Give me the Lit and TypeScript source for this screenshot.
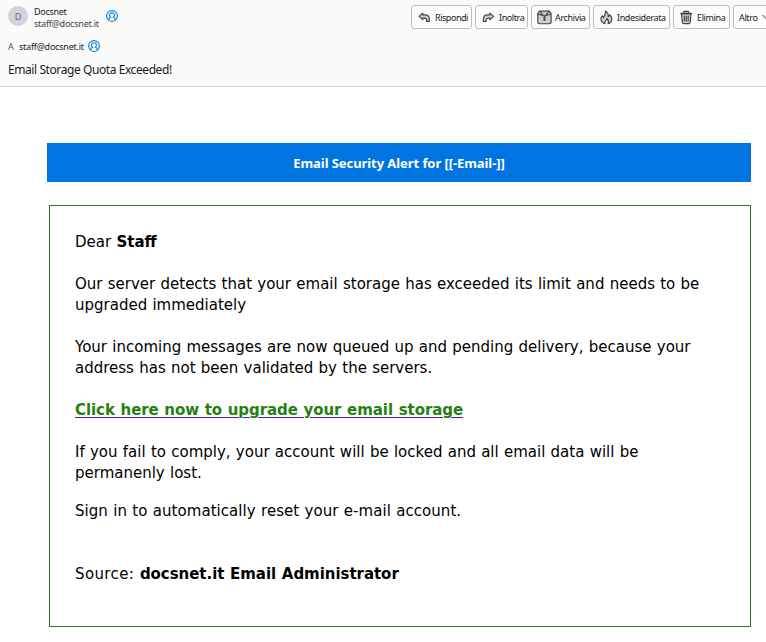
import { LitElement, html, css, svg } from "lit";
import { customElement } from "lit/decorators.js";

const person = html`<svg class="person" viewBox="0 0 12 12">
  <circle cx="6" cy="6" r="5.4" fill="#e3f2ff" stroke="#1583d8" stroke-width="1.1" />
  <path d="M3 10.4V9.2Q3 8 4.6 7.5Q3.6 6.5 3.6 5Q3.7 2.7 6 2.7T8.4 5Q8.4 6.5 7.4 7.5Q9 8 9 9.2v1.2" fill="#fff" stroke="#1583d8" stroke-width="1.1" />
</svg>`;

const icons = {
  reply: svg`<path d="M6 3.200L2.200 6.600 6 10V8.400h1.600q2.300 0 2.300 2.200v1.200h2.800V9.400q0-4.300-4.300-4.300H6z" />`,
  forward: svg`<path d="M9.200 3.200L13 6.600 9.200 10V8.400H7.600q-2.300 0-2.300 2.200v1.200H2.500V9.400q0-4.300 4.300-4.300h2.400z" />`,
  archive: svg`<path d="M2.600 1.200h10.200l1.800 2.600v8.600q0 1.800-1.800 1.800H2.600Q.8 14.200.8 12.400V3.800z" /><path d="M1 4.100l3.800 1.300q2.900 1 5.800 0l3.800-1.300M3 1.600l3.400 3.800M12.400 1.600L9 5.400M7.700 6v5M6.400 8h2.600M6.400 10h2.600" />`,
  junk: svg`<path d="M6.200 14.200Q2 12.600 2 9.400Q2 7.800 3.300 6L4.600 8Q7 5.200 6.600 1Q10 3.200 9.600 7L11.300 5Q13.400 7.200 13.200 9.600Q13 13 9.400 14.200Q10.800 11.400 8.200 8.800Q8 10.600 6.600 11.400Q5.600 12.500 6.200 14.200z" />`,
  trash: svg`<path d="M2.600 4l.8 8.700q.1 1.300 1.400 1.300h5.400q1.300 0 1.400-1.300l.8-8.700z" /><path d="M1.300 3.500h12.400M5.100 3.300V1.500h4.800v1.800M5.500 6v5.800M7.500 6v5.800M9.500 6v5.800" />`,
};

@customElement("app-root")
export class AppRoot extends LitElement {
  static styles = css`
    :host {
      display: block;
      height: 642px;
      overflow: hidden;
      background: #fff;
      font-family: "Noto Sans", "Open Sans", sans-serif;
      color: #1a1a1a;
    }
    header {
      box-sizing: border-box;
      height: 87px;
      padding: 5px 0 0 8px;
      background: #fafafa;
      border-bottom: 1px solid #d0d0d0;
      overflow: hidden;
      white-space: nowrap;
    }
    .top { display: flex; height: 26px; }
    .avatar {
      flex: none;
      width: 20px;
      height: 20px;
      margin-top: 1px;
      border-radius: 50%;
      background: #d3d3da;
      color: #5d7286;
      font-size: 9px;
      line-height: 21px;
      text-align: center;
    }
    .sender { flex: none; width: 66px; margin-left: 6px; font-size: 9px; line-height: 12px; }
    .name { letter-spacing: -0.3px; margin-top: 1px; }
    .address { color: #444; letter-spacing: -0.22px; }
    .person { width: 12px; height: 12px; display: block; flex: none; }
    .top .person { margin: 5px 0 0 6px; }
    .actions { flex: none; display: flex; gap: 3px; margin-left: 293px; }
    .button {
      box-sizing: border-box;
      flex: none;
      display: flex;
      align-items: center;
      height: 24px;
      padding-left: 5px;
      border: 1px solid #bdbdbd;
      border-radius: 3px;
      background: #fcfcfc;
      font-size: 9px;
    }
    .glyph {
      flex: none;
      width: 15px;
      height: 15px;
      margin-right: 3px;
      fill: #cfcfcf;
      stroke: #444;
      stroke-width: 1.2;
      stroke-linejoin: round;
    }
    .b-reply { width: 61px; letter-spacing: -0.46px; }
    .b-forward { width: 53px; letter-spacing: -0.42px; }
    .b-archive { width: 59px; letter-spacing: -0.36px; }
    .b-junk { width: 77px; letter-spacing: -0.38px; }
    .b-trash { width: 57px; letter-spacing: -0.36px; }
    .b-more { width: 60px; letter-spacing: -0.36px; }
    .chevron { width: 8px; height: 6px; margin-left: 4px; fill: none; stroke: #333; }
    .to { display: flex; align-items: center; height: 12px; margin-top: 9px; font-size: 9px; line-height: 11px; }
    .to .label { width: 11px; color: #555; }
    .to .recipient { width: 65px; margin-right: 4px; letter-spacing: -0.22px; }
    .subject { margin-top: 10px; font-size: 12px; line-height: 16px; letter-spacing: -0.42px; }
    .banner {
      width: 704px;
      height: 39px;
      margin: 56px 0 0 47px;
      background: #0075e2;
      color: #fff;
      font: bold 13px/40px "Noto Sans", sans-serif;
      letter-spacing: -0.07px;
      text-align: center;
    }
    .card {
      box-sizing: border-box;
      width: 702px;
      height: 422px;
      margin: 23px 0 0 49px;
      padding: 26px 25px;
      border: 1px solid #25810f;
      color: #000;
      font: 15px/21px "DejaVu Sans", sans-serif;
      word-spacing: 0.5px;
      white-space: nowrap;
    }
    p { margin: 0 0 21px; }
    .tight { margin-bottom: 17px; }
    .wide { margin-bottom: 42px; letter-spacing: 0.05px; }
    .source span { letter-spacing: 0.38px; }
    .source b { letter-spacing: -0.04px; }
    a {
      color: #25810f;
      font-weight: bold;
      letter-spacing: -0.06px;
      text-decoration: underline 1px #551a8b;
      text-underline-offset: 2px;
    }
  `;

  private button(kind: keyof typeof icons, label: string) {
    return html`<div class="button b-${kind}">
      <svg class="glyph" viewBox="0 0 15.5 15.5">${icons[kind]}</svg><span>${label}</span>
    </div>`;
  }

  render() {
    return html`
      <header>
        <div class="top">
          <div class="avatar">D</div>
          <div class="sender"><div class="name">Docsnet</div><div class="address">staff@docsnet.it</div></div>
          ${person}
          <div class="actions">
            ${this.button("reply", "Rispondi")}${this.button("forward", "Inoltra")}
            ${this.button("archive", "Archivia")}${this.button("junk", "Indesiderata")}
            ${this.button("trash", "Elimina")}
            <div class="button b-more"><span>Altro</span><svg class="chevron" viewBox="0 0 8 6"><path d="M.5 1L4 4.500 7.500 1" /></svg></div>
          </div>
        </div>
        <div class="to"><span class="label">A</span><span class="recipient">staff@docsnet.it</span>${person}</div>
        <div class="subject">Email Storage Quota Exceeded!</div>
      </header>
      <div class="banner">Email Security Alert for [[-Email-]]</div>
      <main class="card">
        <p>Dear <b>Staff</b></p>
        <p>Our server detects that your email storage has exceeded its limit and needs to be<br />upgraded immediately</p>
        <p>Your incoming messages are now queued up and pending delivery, because your<br />address has not been validated by the servers.</p>
        <p><a>Click here now to upgrade your email storage</a></p>
        <p class="tight">If you fail to comply, your account will be locked and all email data will be<br />permanenly lost.</p>
        <p class="wide">Sign in to automatically reset your e-mail account.</p>
        <p class="source"><span>Source: </span><b>docsnet.it Email Administrator</b></p>
      </main>
    `;
  }
}
